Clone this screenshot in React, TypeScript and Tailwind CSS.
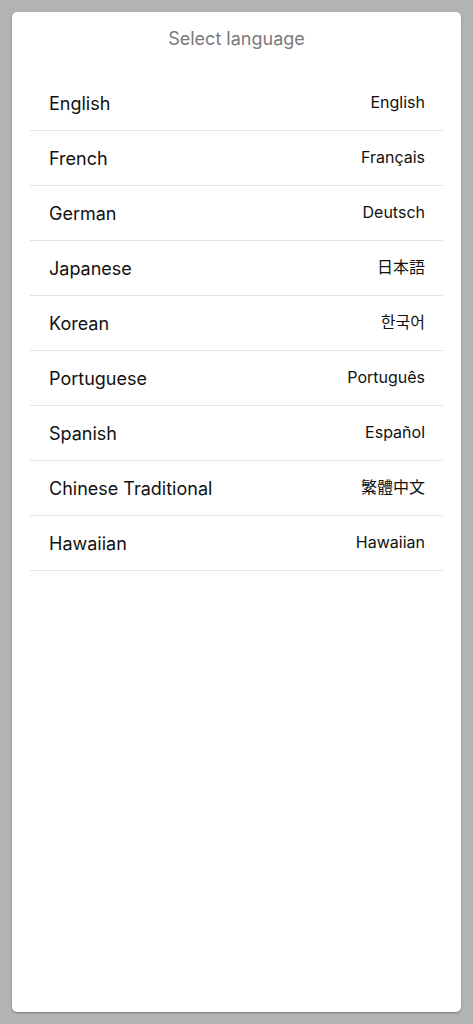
import React from "react";

const langs: [string, string][] = [
  ["English", "English"],
  ["French", "Français"],
  ["German", "Deutsch"],
  ["Japanese", "日本語"],
  ["Korean", "한국어"],
  ["Portuguese", "Português"],
  ["Spanish", "Español"],
  ["Chinese Traditional", "繁體中文"],
  ["Hawaiian", "Hawaiian"],
];

export default function App() {
  return (
    <div
      className="min-h-[1024px] bg-[#b3b3b3] px-[12px] pt-[12px] pb-[12px] flex"
      style={{ fontFamily: 'Inter, "Noto Sans CJK JP", "Noto Sans CJK KR", "Noto Sans CJK TC", sans-serif' }}
    >
      <div className="flex-1 bg-white rounded-[5px] shadow-[0_1px_2px_rgba(0,0,0,0.35)] flex flex-col">
        <div className="h-[54px] flex items-center justify-center text-[18px] text-[#7a7a7a] pb-[1px]">
          Select language
        </div>
        <div className="mt-[10px] mx-[18px]">
          {langs.map(([a, b]) => (
            <div
              key={a}
              className="h-[55px] border-b border-[#e3e3e3] flex items-center justify-between pl-[19px] pr-[18px]"
            >
              <span className="text-[18px] text-[#111]">{a}</span>
              <span className="text-[16px] text-[#111] pb-[2px]">{b}</span>
            </div>
          ))}
        </div>
      </div>
    </div>
  );
}
